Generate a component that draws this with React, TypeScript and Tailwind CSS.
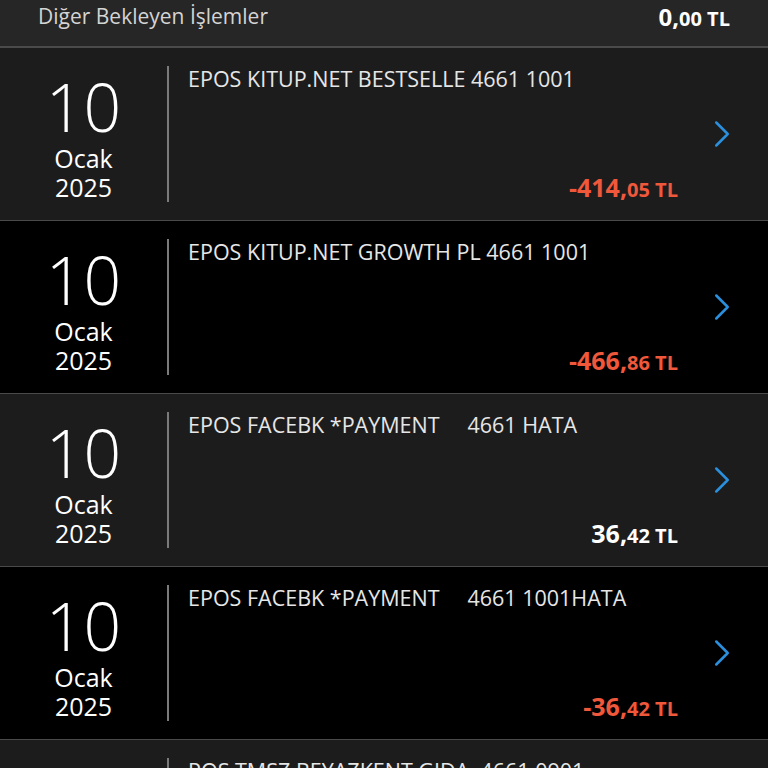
import { ChevronRight } from 'lucide-react';

type Tx = {
  day: string;
  month: string;
  year: string;
  title: string;
  whole: string;
  cents: string;
  negative: boolean;
};

const TXS: Tx[] = [
  { day: '10', month: 'Ocak', year: '2025', title: 'EPOS KITUP.NET BESTSELLE 4661 1001', whole: '-414', cents: '05', negative: true },
  { day: '10', month: 'Ocak', year: '2025', title: 'EPOS KITUP.NET GROWTH PL 4661 1001', whole: '-466', cents: '86', negative: true },
  { day: '10', month: 'Ocak', year: '2025', title: 'EPOS FACEBK *PAYMENT\u00a0\u00a0\u00a0\u00a0\u00a04661 HATA', whole: '36', cents: '42', negative: false },
  { day: '10', month: 'Ocak', year: '2025', title: 'EPOS FACEBK *PAYMENT\u00a0\u00a0\u00a0\u00a0\u00a04661 1001HATA', whole: '-36', cents: '42', negative: true },
  { day: '10', month: 'Ocak', year: '2025', title: 'POS TMSZ BEYAZKENT GIDA  4661 0901', whole: '-120', cents: '00', negative: true },
];

function Amount({ whole, cents, negative }: { whole: string; cents: string; negative: boolean }) {
  return (
    <div className={`font-bold leading-none ${negative ? 'text-[#f0583c]' : 'text-white'}`}>
      <span className="text-[25px]">{whole},</span>
      <span className="text-[20px]">{cents} TL</span>
    </div>
  );
}

function TxRow({ tx, index }: { tx: Tx; index: number }) {
  return (
    <div
      className={`flex h-[173px] shrink-0 border-b border-[#4a4a4a] ${
        index % 2 === 0 ? 'bg-[#1c1c1c]' : 'bg-black'
      }`}
    >
      <div className="flex w-[167px] flex-col items-center pt-[25px] text-white">
        <div className="text-[66px] font-light leading-[66px]">{tx.day}</div>
        <div className="mt-[5px] text-[25px] leading-[29px]">{tx.month}</div>
        <div className="text-[25px] leading-[29px]">{tx.year}</div>
      </div>
      <div className="my-[18px] w-[2px] bg-[#7a7a7a]" />
      <div className="flex flex-1 flex-col pl-[19px] pr-[90px] pt-[17px] pb-[20px]">
        <div className="text-[21.5px] leading-[28px] text-[#e6e6e6] whitespace-pre">{tx.title}</div>
        <div className="mt-auto flex justify-end">
          <Amount whole={tx.whole} cents={tx.cents} negative={tx.negative} />
        </div>
      </div>
      <div className="flex w-[0px] items-center">
        <ChevronRight className="-ml-[69px] h-[46px] w-[46px] shrink-0 text-[#2a8fdc]" strokeWidth={1.3} />
      </div>
    </div>
  );
}

export default function App() {
  return (
    <div
      className="h-[768px] w-[768px] overflow-hidden bg-black"
      style={{ fontFamily: '"Open Sans", "Noto Sans", sans-serif' }}
    >
      <div className="flex h-[48px] items-center justify-between border-b-2 border-[#4a4a4a] bg-[#262626] pb-[12px] pl-[38px] pr-[38px]">
        <span className="text-[21px] text-[#d4d4d4]">Diğer Bekleyen İşlemler</span>
        <span className="font-bold text-white leading-none">
          <span className="text-[24px]">0,</span>
          <span className="text-[20px]">00 TL</span>
        </span>
      </div>
      {TXS.map((tx, i) => (
        <TxRow key={i} tx={tx} index={i} />
      ))}
    </div>
  );
}
